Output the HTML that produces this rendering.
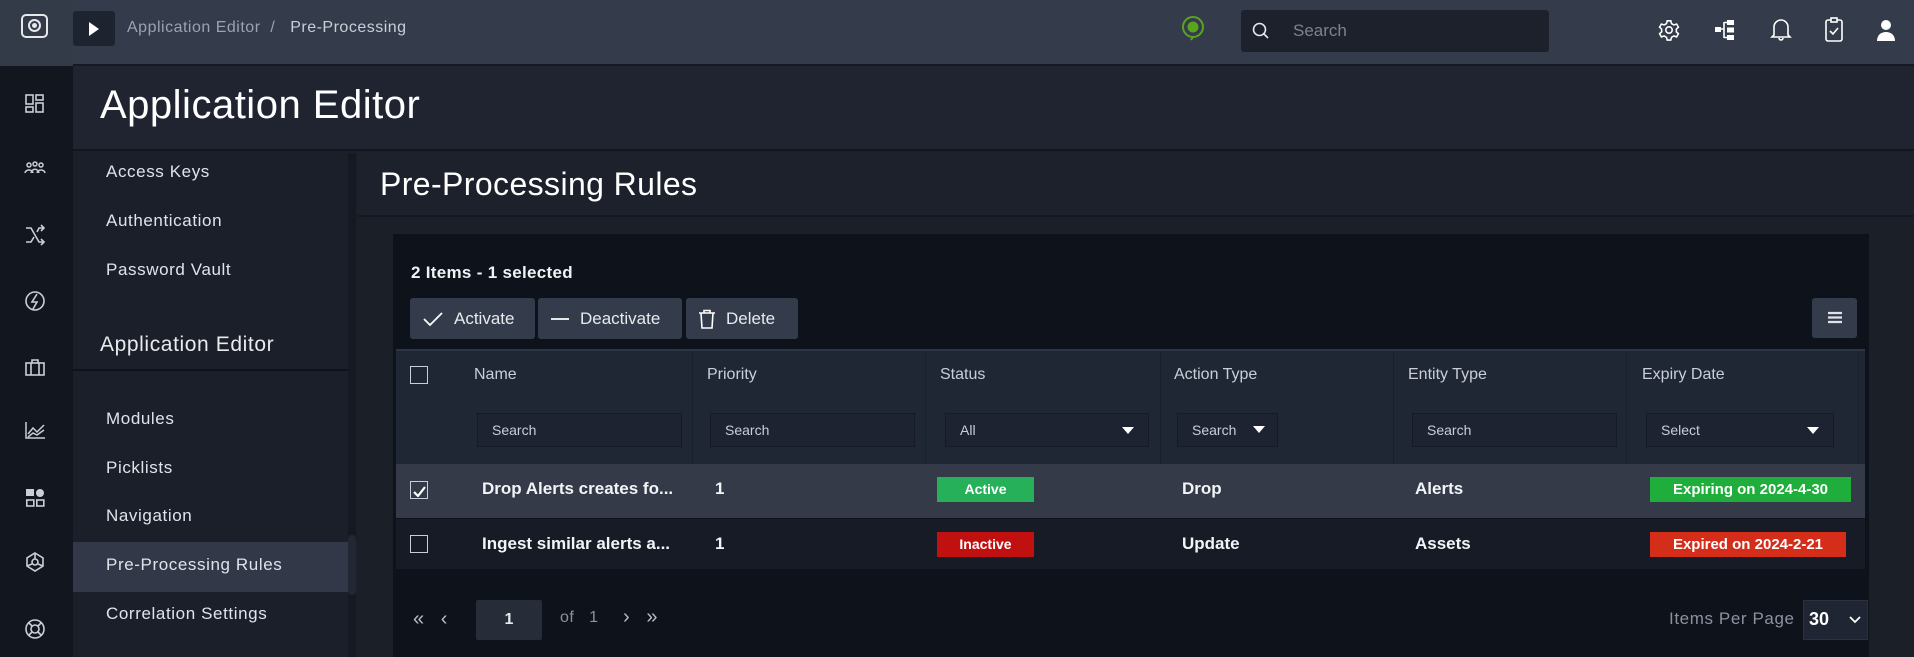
<!DOCTYPE html>
<html><head><meta charset="utf-8"><style>
*{box-sizing:border-box;margin:0;padding:0}
body{width:1914px;height:657px;overflow:hidden;background:#1b1f28;font-family:"Liberation Sans",sans-serif;color:#e8eaee;position:relative}
.a{position:absolute}
.t{white-space:nowrap}
svg{display:block}
.nav{font-size:17px;letter-spacing:.6px;color:#dfe3ea;left:106px}
.btn{background:#343b4a;border-radius:3px;height:41px;top:298px;font-size:17px;display:flex;align-items:center;gap:10px;padding-left:12px}
.hd{font-size:16px;color:#c9ced8;top:366px}
.inp{background:#1d2330;border:1px solid #151a24;height:34px;top:413px;font-size:14px;color:#c9ced8;padding:8px 14px}
.cell{font-size:17px;font-weight:bold;color:#f2f4f7}
.badge{font-size:14px;font-weight:bold;color:#fff;text-align:center;height:25px;line-height:25px}
.cb{width:18px;height:18px;border:1.5px solid #c9ced8;left:410px}
</style></head><body>
<!-- rail -->
<div class="a" style="left:0;top:0;width:73px;height:657px;background:#12161e"></div>
<div class="a" style="left:0;top:0;width:73px;height:66px;background:#333a48"></div>
<div class="a" style="left:21px;top:14px;width:27px;height:24px;border:2px solid #e6e8ec;border-radius:5px"></div>
<div class="a" style="left:28px;top:19px;width:13px;height:13px;border:2px solid #e6e8ec;border-radius:50%"></div>
<div class="a" style="left:32px;top:23px;width:5px;height:5px;background:#e6e8ec;border-radius:50%"></div>
<svg class="a" style="left:24px;top:93px" width="22" height="22" viewBox="0 0 22 22" fill="none" stroke="#c9ced8" stroke-width="1.6"><rect x="2" y="2" width="7" height="9"/><rect x="12" y="2" width="7" height="5"/><rect x="2" y="14" width="7" height="5"/><rect x="12" y="10" width="7" height="9"/></svg>
<svg class="a" style="left:24px;top:160px" width="22" height="16" viewBox="0 0 22 16" fill="none" stroke="#c9ced8" stroke-width="1.5"><circle cx="5" cy="5" r="2"/><circle cx="11" cy="4" r="2"/><circle cx="17" cy="5" r="2"/><path d="M1 13c1-4 7-4 8 0M7 13c1-5 7-5 8 0M13 13c1-4 7-4 8 0"/></svg>
<svg class="a" style="left:24px;top:224px" width="22" height="22" viewBox="0 0 22 22" fill="none" stroke="#c9ced8" stroke-width="1.6"><path d="M2 4h5l8 14h5M2 18h5l3-5M13 8l2-4h5M17 1l3 3-3 3M17 15l3 3-3 3"/></svg>
<svg class="a" style="left:24px;top:290px" width="22" height="22" viewBox="0 0 22 22" fill="none" stroke="#c9ced8" stroke-width="1.6"><circle cx="11" cy="11" r="9"/><path d="M13 4l-5 8h5l-4 7"/></svg>
<svg class="a" style="left:24px;top:357px" width="22" height="20" viewBox="0 0 22 20" fill="none" stroke="#c9ced8" stroke-width="1.6"><rect x="2" y="6" width="18" height="12"/><path d="M8 6V3h6v3M7 6v12M15 6v12"/></svg>
<svg class="a" style="left:24px;top:420px" width="22" height="20" viewBox="0 0 22 20" fill="none" stroke="#c9ced8" stroke-width="1.5"><path d="M2 2v16h19M4 14l5-6 4 4 7-7M4 17l5-4 4 2 7-5"/></svg>
<svg class="a" style="left:24px;top:487px" width="22" height="22" viewBox="0 0 22 22"><rect x="2" y="2" width="8" height="7" fill="#c9ced8"/><circle cx="16" cy="6" r="4" fill="#c9ced8"/><rect x="2.8" y="13" width="7" height="6" fill="none" stroke="#c9ced8" stroke-width="1.6"/><rect x="12.8" y="13" width="7" height="6" fill="none" stroke="#c9ced8" stroke-width="1.6"/></svg>
<svg class="a" style="left:24px;top:551px" width="22" height="22" viewBox="0 0 22 22" fill="none" stroke="#c9ced8" stroke-width="1.6"><path d="M11 2l8 5v8l-8 5-8-5V7z"/><circle cx="11" cy="11" r="3"/><path d="M3 15l5-2M19 15l-5-2M11 2v6"/></svg>
<svg class="a" style="left:24px;top:618px" width="22" height="22" viewBox="0 0 22 22" fill="none" stroke="#c9ced8" stroke-width="1.6"><circle cx="11" cy="11" r="9"/><circle cx="11" cy="11" r="4"/><path d="M5 5l3 3M17 5l-3 3M5 17l3-3M17 17l-3-3"/></svg>
<!-- top bar -->
<div class="a" style="left:73px;top:0;width:1841px;height:66px;background:#343b4a;border-bottom:2px solid #151922"></div>
<div class="a" style="left:73px;top:11px;width:42px;height:35px;background:#1e2330;border-radius:3px"></div>
<svg class="a" style="left:88px;top:21px" width="12" height="16"><path d="M1 1l10 7-10 7z" fill="#fff"/></svg>
<div class="a t" style="left:127px;top:19px;font-size:16px;letter-spacing:.5px;color:#9aa3b2">Application Editor&nbsp;&nbsp;/&nbsp;&nbsp; <span style="color:#c9ced8">Pre-Processing</span></div>
<svg class="a" style="left:1180px;top:14px" width="26" height="28" viewBox="0 0 26 28" fill="none"><circle cx="13" cy="13" r="10" stroke="#5aa31e" stroke-width="2"/><circle cx="13" cy="13" r="5.5" fill="#5aa31e"/><path d="M13 23l-2 3" stroke="#5aa31e" stroke-width="2"/></svg>
<div class="a" style="left:1241px;top:10px;width:308px;height:42px;background:#1d212c;border-radius:3px"></div>
<svg class="a" style="left:1252px;top:22px" width="18" height="18" fill="none" stroke="#e6e8ec" stroke-width="1.6"><circle cx="7.5" cy="7.5" r="6"/><path d="M12 12l4 4"/></svg>
<div class="a t" style="left:1293px;top:21px;font-size:17px;color:#7b8290">Search</div>
<svg class="a" style="left:1658px;top:19px" width="22" height="22" viewBox="0 0 24 24" fill="none" stroke="#fff" stroke-width="1.7"><circle cx="12" cy="12" r="3.5"/><path d="M10 2h4l.7 3 2.6 1.5 3-1 2 3.5-2.3 2v3l2.3 2-2 3.5-3-1-2.6 1.5-.7 3h-4l-.7-3-2.6-1.5-3 1-2-3.5 2.3-2v-3l-2.3-2 2-3.5 3 1L9.3 5z"/></svg>
<svg class="a" style="left:1714px;top:19px" width="22" height="22" viewBox="0 0 22 22" fill="#fff"><rect x="1" y="8" width="6" height="5"/><rect x="13" y="1" width="7" height="5"/><rect x="13" y="8.5" width="7" height="5"/><rect x="13" y="16" width="7" height="5"/><path d="M7 10h3M10 3.5h3M10 18.5h3M10 3v16" stroke="#fff" stroke-width="1.6"/></svg>
<svg class="a" style="left:1770px;top:17px" width="22" height="26" viewBox="0 0 22 26" fill="none" stroke="#fff" stroke-width="1.6"><path d="M4 18V10a7 7 0 0 1 14 0v8l2 2H2z"/><path d="M9 21a2 2 0 0 0 4 0"/></svg>
<svg class="a" style="left:1824px;top:17px" width="20" height="26" viewBox="0 0 20 26" fill="none" stroke="#fff" stroke-width="1.6"><rect x="2" y="3" width="16" height="21" rx="2"/><rect x="7" y="1" width="6" height="4" fill="#343b4a"/><path d="M6 14l3 3 5-6"/></svg>
<svg class="a" style="left:1876px;top:18px" width="20" height="24" viewBox="0 0 20 24" fill="#fff"><circle cx="10" cy="7" r="5"/><path d="M1 23c0-6 4-9 9-9s9 3 9 9z"/></svg>
<!-- header band -->
<div class="a" style="left:73px;top:66px;width:1841px;height:85px;background:#1f2430;border-bottom:2px solid #12161e"></div>
<div class="a t" style="left:100px;top:83px;font-size:40px;color:#fff;letter-spacing:.5px">Application Editor</div>
<!-- left nav -->
<div class="a" style="left:73px;top:153px;width:275px;height:504px;background:#1b1f29"></div>
<div class="a" style="left:348px;top:153px;width:8px;height:504px;background:#151922"></div>
<div class="a" style="left:348px;top:535px;width:8px;height:60px;background:#222733;border-radius:4px"></div>
<div class="a t nav" style="top:162px">Access Keys</div>
<div class="a t nav" style="top:211px">Authentication</div>
<div class="a t nav" style="top:260px">Password Vault</div>
<div class="a t" style="left:100px;top:333px;font-size:21px;letter-spacing:.6px;color:#e8eaee">Application Editor</div>
<div class="a" style="left:73px;top:369px;width:275px;height:2px;background:#0f1218"></div>
<div class="a t nav" style="top:409px">Modules</div>
<div class="a t nav" style="top:458px">Picklists</div>
<div class="a t nav" style="top:506px">Navigation</div>
<div class="a" style="left:73px;top:542px;width:275px;height:50px;background:#323848"></div>
<div class="a t nav" style="top:555px">Pre-Processing Rules</div>
<div class="a t nav" style="top:604px">Correlation Settings</div>
<!-- main -->
<div class="a" style="left:358px;top:153px;width:1556px;height:64px;background:#1d212b;border-bottom:2px solid #141821"></div>
<div class="a t" style="left:380px;top:166px;font-size:32px;color:#fff;letter-spacing:.4px">Pre-Processing Rules</div>
<div class="a" style="left:393px;top:234px;width:1476px;height:423px;background:#0e121a"></div>
<div class="a t" style="left:411px;top:263px;font-size:17px;color:#f0f2f5;font-weight:bold;letter-spacing:.3px">2 Items - 1 selected</div>
<div class="a btn t" style="left:410px;width:125px"><svg width="22" height="16"><path d="M2 8l6 6 12-12" fill="none" stroke="#fff" stroke-width="1.8"/></svg>Activate</div>
<div class="a btn t" style="left:538px;width:144px"><svg width="20" height="16"><path d="M1 8h18" stroke="#fff" stroke-width="1.8"/></svg>Deactivate</div>
<div class="a btn t" style="left:686px;width:112px"><svg width="18" height="20" fill="none" stroke="#fff" stroke-width="1.6"><path d="M1 4h16M6 4V1.5h6V4M3 4l1 15h10l1-15"/></svg>Delete</div>
<div class="a" style="left:1812px;top:298px;width:45px;height:40px;background:#343b4a;border-radius:3px"></div>
<svg class="a" style="left:1828px;top:311px" width="14" height="13"><path d="M0 2h14M0 6.5h14M0 11h14" stroke="#dfe3ea" stroke-width="2.2"/></svg>
<!-- table header -->
<div class="a" style="left:396px;top:349px;width:1469px;height:115px;background:#1f2735;border-top:2px solid #2c3545"></div>
<div class="a" style="left:692px;top:351px;width:1px;height:113px;background:#18202c"></div>
<div class="a" style="left:925px;top:351px;width:1px;height:113px;background:#18202c"></div>
<div class="a" style="left:1160px;top:351px;width:1px;height:113px;background:#18202c"></div>
<div class="a" style="left:1393px;top:351px;width:1px;height:113px;background:#18202c"></div>
<div class="a" style="left:1626px;top:351px;width:1px;height:113px;background:#18202c"></div>
<div class="a" style="left:1858px;top:351px;width:1px;height:113px;background:#18202c"></div>
<div class="a cb" style="top:366px"></div>
<div class="a t hd" style="left:474px">Name</div>
<div class="a t hd" style="left:707px">Priority</div>
<div class="a t hd" style="left:940px">Status</div>
<div class="a t hd" style="left:1174px">Action Type</div>
<div class="a t hd" style="left:1408px">Entity Type</div>
<div class="a t hd" style="left:1642px">Expiry Date</div>
<div class="a inp t" style="left:477px;width:205px">Search</div>
<div class="a inp t" style="left:710px;width:205px">Search</div>
<div class="a inp t" style="left:945px;width:204px">All<span style="position:absolute;right:14px;top:13px;border:6px solid transparent;border-top:7px solid #fff"></span></div>
<div class="a inp t" style="left:1177px;width:101px">Search<span style="position:absolute;right:12px;top:12px;border:6px solid transparent;border-top:7px solid #fff"></span></div>
<div class="a inp t" style="left:1412px;width:205px">Search</div>
<div class="a inp t" style="left:1646px;width:188px">Select<span style="position:absolute;right:14px;top:13px;border:6px solid transparent;border-top:7px solid #fff"></span></div>
<!-- rows -->
<div class="a" style="left:396px;top:464px;width:1469px;height:54px;background:#343a48"></div>
<div class="a" style="left:396px;top:518px;width:1469px;height:51px;background:#161b25;border-top:1px solid #0e121a"></div>
<div class="a cb" style="top:481px"></div>
<svg class="a" style="left:413px;top:486px" width="13" height="11"><path d="M1 6l4 4 7-9" fill="none" stroke="#fff" stroke-width="2.2"/></svg>
<div class="a t cell" style="left:482px;top:479px">Drop Alerts creates fo...</div>
<div class="a t cell" style="left:715px;top:479px">1</div>
<div class="a badge" style="left:937px;top:477px;width:97px;background:#27b05a">Active</div>
<div class="a t cell" style="left:1182px;top:479px">Drop</div>
<div class="a t cell" style="left:1415px;top:479px">Alerts</div>
<div class="a badge" style="left:1650px;top:477px;width:201px;background:#1fad3c;font-size:15px">Expiring on 2024-4-30</div>
<div class="a cb" style="top:535px"></div>
<div class="a t cell" style="left:482px;top:534px">Ingest similar alerts a...</div>
<div class="a t cell" style="left:715px;top:534px">1</div>
<div class="a badge" style="left:937px;top:532px;width:97px;background:#c01010">Inactive</div>
<div class="a t cell" style="left:1182px;top:534px">Update</div>
<div class="a t cell" style="left:1415px;top:534px">Assets</div>
<div class="a badge" style="left:1650px;top:532px;width:196px;background:#d42e1a;font-size:15px">Expired on 2024-2-21</div>
<!-- footer -->
<div class="a t" style="left:413px;top:608px;font-size:20px;color:#b7bdc8">«&nbsp;&nbsp;&nbsp;‹</div>
<div class="a" style="left:476px;top:600px;width:66px;height:40px;background:#262c38;border-radius:2px;text-align:center;line-height:40px;font-size:16px;font-weight:bold">1</div>
<div class="a t" style="left:560px;top:609px;font-size:16px;color:#8b92a0;letter-spacing:.5px">of&nbsp;&nbsp;&nbsp;1</div>
<div class="a t" style="left:623px;top:606px;font-size:20px;color:#b7bdc8">›&nbsp;&nbsp;&nbsp;»</div>
<div class="a t" style="left:1669px;top:609px;font-size:17px;color:#8b92a0;letter-spacing:.6px">Items Per Page</div>
<div class="a" style="left:1803px;top:600px;width:65px;height:40px;background:#1f2532;border:1px solid #2a3140"></div>
<div class="a t" style="left:1809px;top:609px;font-size:18px;font-weight:bold;color:#fff">30</div>
<svg class="a" style="left:1849px;top:616px" width="12" height="8"><path d="M1 1l5 5 5-5" fill="none" stroke="#fff" stroke-width="1.8"/></svg>
</body></html>
